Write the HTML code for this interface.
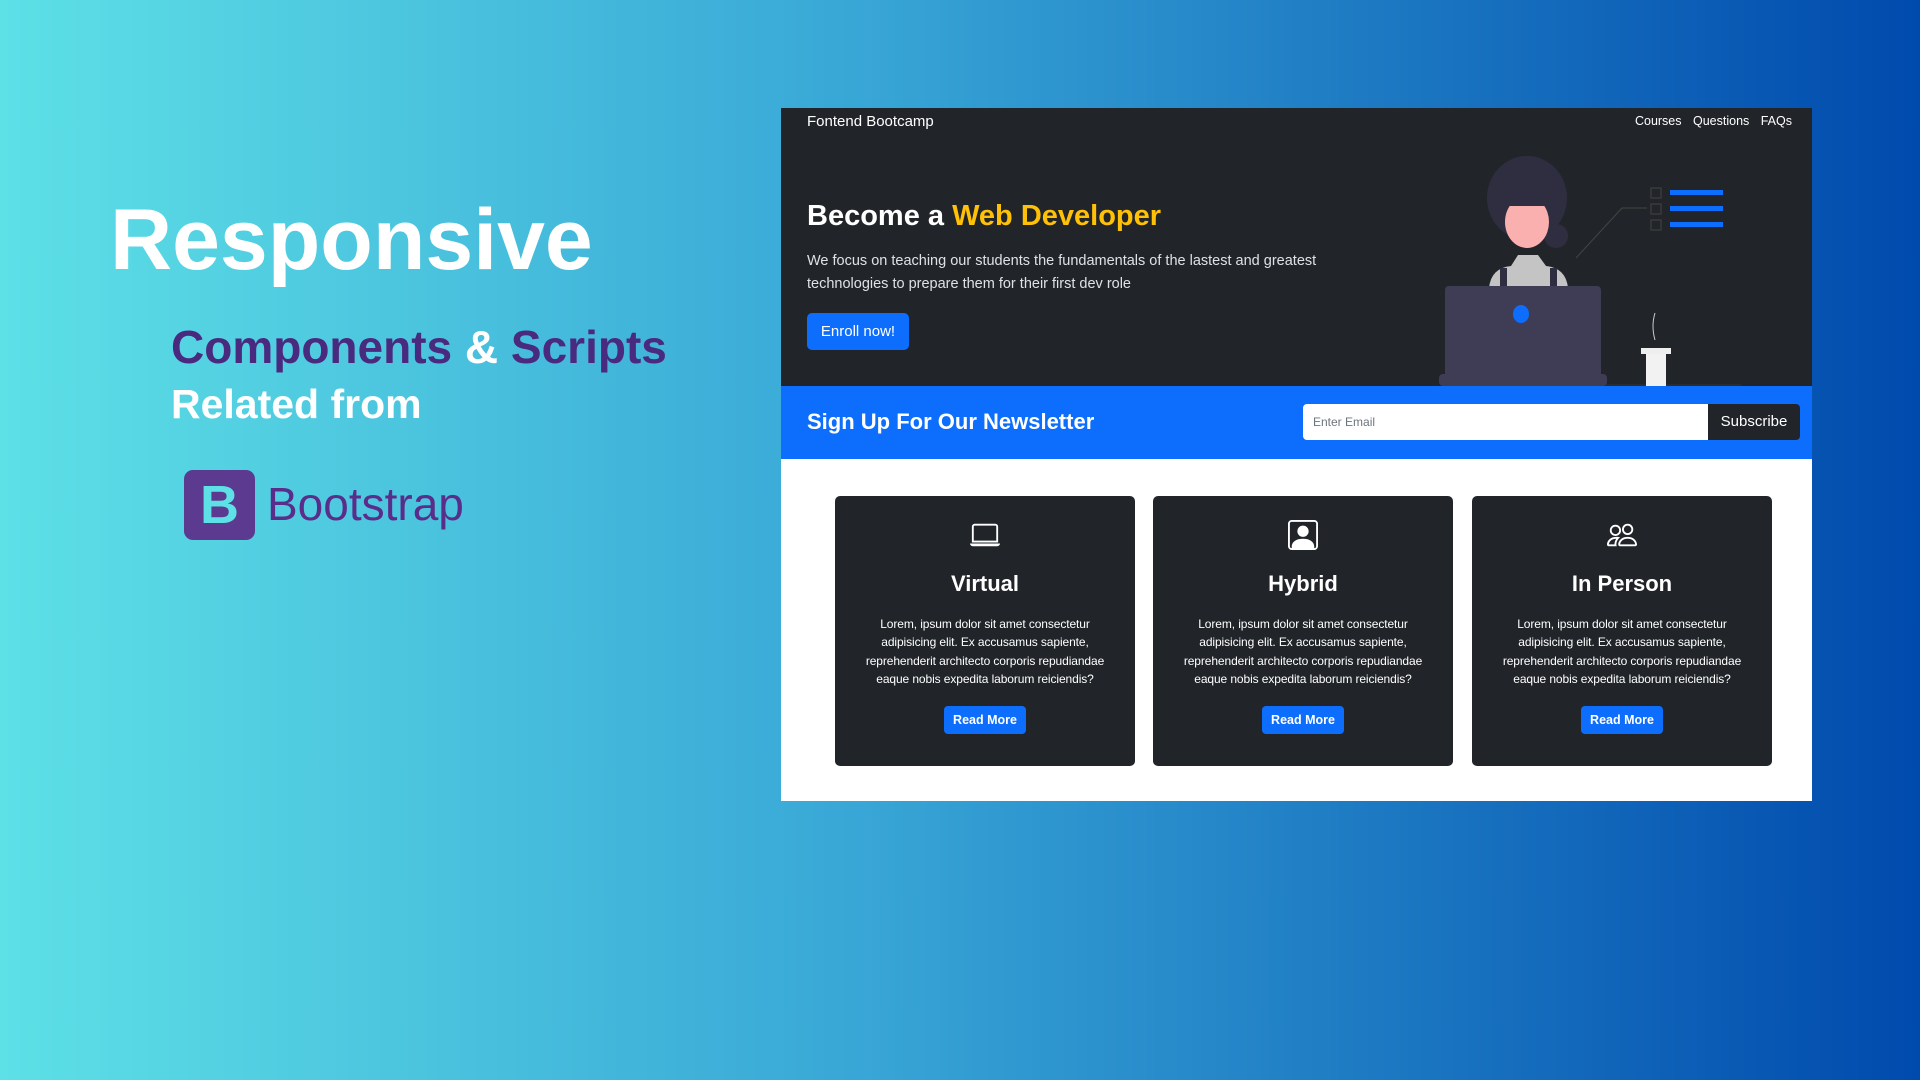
<!DOCTYPE html>
<html><head><meta charset="utf-8"><style>
*{margin:0;padding:0;box-sizing:border-box}
body{width:1920px;height:1080px;overflow:hidden;position:relative;background:linear-gradient(90deg,#5de0e6 0%,#38a6d6 45%,#004aad 100%);font-family:"Liberation Sans",sans-serif}
.a{position:absolute}
#panel{left:781px;top:108px;width:1031px;height:693px;background:#fff;overflow:hidden}
#hero{left:0;top:0;width:1031px;height:278px;background:#212529}
#news{left:0;top:278px;width:1031px;height:73px;background:#0d6efd}
.card{top:388px;width:300px;height:270px;background:#212529;border-radius:5px;text-align:center;color:#fff}
.card svg{position:absolute;left:135px;top:24px}
.card h3{position:absolute;top:75px;width:100%;font-size:22px;font-weight:bold}
.card p{position:absolute;top:119px;left:0;right:0;font-size:12px;line-height:18.4px;white-space:nowrap;letter-spacing:-0.1px}
.card .b{position:absolute;left:109px;top:210px;width:82px;height:28px;background:#0d6efd;border-radius:4px;font-size:12.5px;font-weight:bold;line-height:28px}
</style></head><body>
<div class="a" style="left:110px;top:190px;color:#fff;font-size:86px;font-weight:bold;line-height:100px">Responsive</div>
<div class="a" style="left:171px;top:320px;color:#4a2a7e;font-size:46px;font-weight:bold;line-height:54px">Components <span style="color:#fff">&amp;</span> Scripts</div>
<div class="a" style="left:171px;top:380px;color:#fff;font-size:41px;font-weight:bold;line-height:48px">Related from</div>
<div class="a" style="left:184px;top:470px;width:71px;height:70px;background:#5c3a8f;border-radius:9px;color:#5de0e6;font-size:54px;font-weight:bold;text-align:center;line-height:70px">B</div>
<div class="a" style="left:267px;top:476px;color:#5a2d8a;font-size:46px;line-height:56px">Bootstrap</div>

<div class="a" id="panel">
 <div class="a" id="hero">
  <div class="a" style="left:26px;top:2px;color:#fff;font-size:15px;line-height:24px">Fontend Bootcamp</div>
  <div class="a" style="right:20px;top:3px;color:#fff;font-size:12.5px;line-height:20px;word-spacing:8px">Courses Questions FAQs</div>
  <div class="a" style="left:26px;top:88px;color:#fff;font-size:29px;font-weight:bold;line-height:40px">Become a <span style="color:#ffc107">Web Developer</span></div>
  <div class="a" style="left:26px;top:142px;color:#dee2e6;font-size:14.5px;line-height:23px">We focus on teaching our students the fundamentals of the lastest and greatest<br>technologies to prepare them for their first dev role</div>
  <div class="a" style="left:26px;top:205px;width:102px;height:37px;background:#0d6efd;border-radius:5px;color:#fff;font-size:15px;text-align:center;line-height:37px">Enroll now!</div>
  <svg class="a" style="left:0;top:0" width="1031" height="278">
   <line x1="690" y1="277" x2="960" y2="277" stroke="#333" stroke-width="1"/>
   <path d="M795 150 L841 100 L866 100" stroke="#444" fill="none"/>
   <rect x="870" y="80" width="10" height="10" fill="none" stroke="#444"/>
   <rect x="870" y="96" width="10" height="10" fill="none" stroke="#444"/>
   <rect x="870" y="112" width="10" height="10" fill="none" stroke="#444"/>
   <rect x="889" y="82" width="53" height="5" fill="#0d6efd"/>
   <rect x="889" y="98" width="53" height="5" fill="#0d6efd"/>
   <rect x="889" y="114" width="53" height="5" fill="#0d6efd"/>
   <ellipse cx="746" cy="90" rx="40" ry="42" fill="#2f2e41"/>
   <circle cx="775" cy="128" r="12" fill="#2f2e41"/>
   <ellipse cx="746" cy="114" rx="22" ry="26" fill="#fbb0b0"/>
   <rect x="724" y="82" width="44" height="16" fill="#2f2e41"/>
   <path d="M708 180 Q710 160 730 158 L737 147 L757 147 L765 158 Q785 160 787 180 L787 210 L708 210Z" fill="#c4c4c4"/>
   <rect x="719" y="160" width="7" height="50" fill="#2f2e41"/><rect x="769" y="160" width="7" height="50" fill="#2f2e41"/>
   <rect x="664" y="178" width="156" height="92" rx="4" fill="#3f3d56"/>
   <rect x="658" y="266" width="168" height="12" rx="4" fill="#3f3d56"/>
   <ellipse cx="740" cy="206" rx="8" ry="9" fill="#0d6efd"/>
   <path d="M874 205 Q870 218 874 232" stroke="#ccc" fill="none"/>
   <rect x="860" y="240" width="30" height="6" fill="#eee"/>
   <rect x="865" y="246" width="20" height="32" fill="#f2f2f2"/>
  </svg>
 </div>
 <div class="a" id="news">
  <div class="a" style="left:26px;top:21px;color:#fff;font-size:22px;font-weight:bold;line-height:30px">Sign Up For Our Newsletter</div>
  <div class="a" style="left:522px;top:18px;width:405px;height:36px;background:#fff;border-radius:4px 0 0 4px;color:#6c757d;font-size:12px;line-height:36px;padding-left:10px">Enter Email</div>
  <div class="a" style="left:927px;top:18px;width:92px;height:36px;background:#212529;border-radius:0 4px 4px 0;color:#fff;font-size:15px;line-height:36px;text-align:center">Subscribe</div>
 </div>
 <div class="a card" style="left:54px">
  <svg width="30" height="30" viewBox="0 0 16 16" fill="#fff"><path d="M13.5 3a.5.5 0 0 1 .5.5V11H2V3.5a.5.5 0 0 1 .5-.5zm-11-1A1.5 1.5 0 0 0 1 3.5V12h14V3.5A1.5 1.5 0 0 0 13.5 2zM0 12.5h16a1.5 1.5 0 0 1-1.5 1.5h-13A1.5 1.5 0 0 1 0 12.5"/></svg>
  <h3>Virtual</h3>
  <p>Lorem, ipsum dolor sit amet consectetur<br>adipisicing elit. Ex accusamus sapiente,<br>reprehenderit architecto corporis repudiandae<br>eaque nobis expedita laborum reiciendis?</p>
  <div class="b">Read More</div></div>
 <div class="a card" style="left:372px">
  <svg width="30" height="30" viewBox="0 0 16 16" fill="#fff"><path d="M11 6a3 3 0 1 1-6 0 3 3 0 0 1 6 0"/><path d="M2 0a2 2 0 0 0-2 2v12a2 2 0 0 0 2 2h12a2 2 0 0 0 2-2V2a2 2 0 0 0-2-2zm12 1a1 1 0 0 1 1 1v12a1 1 0 0 1-1 1v-1c0-1-1-4-6-4s-6 3-6 4v1a1 1 0 0 1-1-1V2a1 1 0 0 1 1-1z"/></svg>
  <h3>Hybrid</h3>
  <p>Lorem, ipsum dolor sit amet consectetur<br>adipisicing elit. Ex accusamus sapiente,<br>reprehenderit architecto corporis repudiandae<br>eaque nobis expedita laborum reiciendis?</p>
  <div class="b">Read More</div></div>
 <div class="a card" style="left:691px">
  <svg width="30" height="30" viewBox="0 0 16 16" fill="#fff"><path d="M15 14s1 0 1-1-1-4-5-4-5 3-5 4 1 1 1 1zm-7.98-1L7 12.996c.001-.264.167-1.03.76-1.720C8.312 10.629 9.282 10 11 10c1.717 0 2.687.63 3.24 1.276.593.69.758 1.457.76 1.72l-.008.002-.014.002zM11 7a2 2 0 1 0 0-4 2 2 0 0 0 0 4m3-2a3 3 0 1 1-6 0 3 3 0 0 1 6 0M6.936 9.28a6 6 0 0 0-1.23-.247A7 7 0 0 0 5 9c-4 0-5 3-5 4q0 1 1 1h4.216A2.240 2.240 0 0 1 5 13c0-1.01.377-2.042 1.090-2.904.243-.294.526-.569.846-.816M4.920 10A5.500 5.500 0 0 0 4 13H1c0-.26.164-1.030.76-1.724.545-.636 1.492-1.256 3.160-1.275ZM1.500 5.500a3 3 0 1 1 6 0 3 3 0 0 1-6 0m3-2a2 2 0 1 0 0 4 2 2 0 0 0 0-4"/></svg>
  <h3>In Person</h3>
  <p>Lorem, ipsum dolor sit amet consectetur<br>adipisicing elit. Ex accusamus sapiente,<br>reprehenderit architecto corporis repudiandae<br>eaque nobis expedita laborum reiciendis?</p>
  <div class="b">Read More</div></div>
</div>
</body></html>
